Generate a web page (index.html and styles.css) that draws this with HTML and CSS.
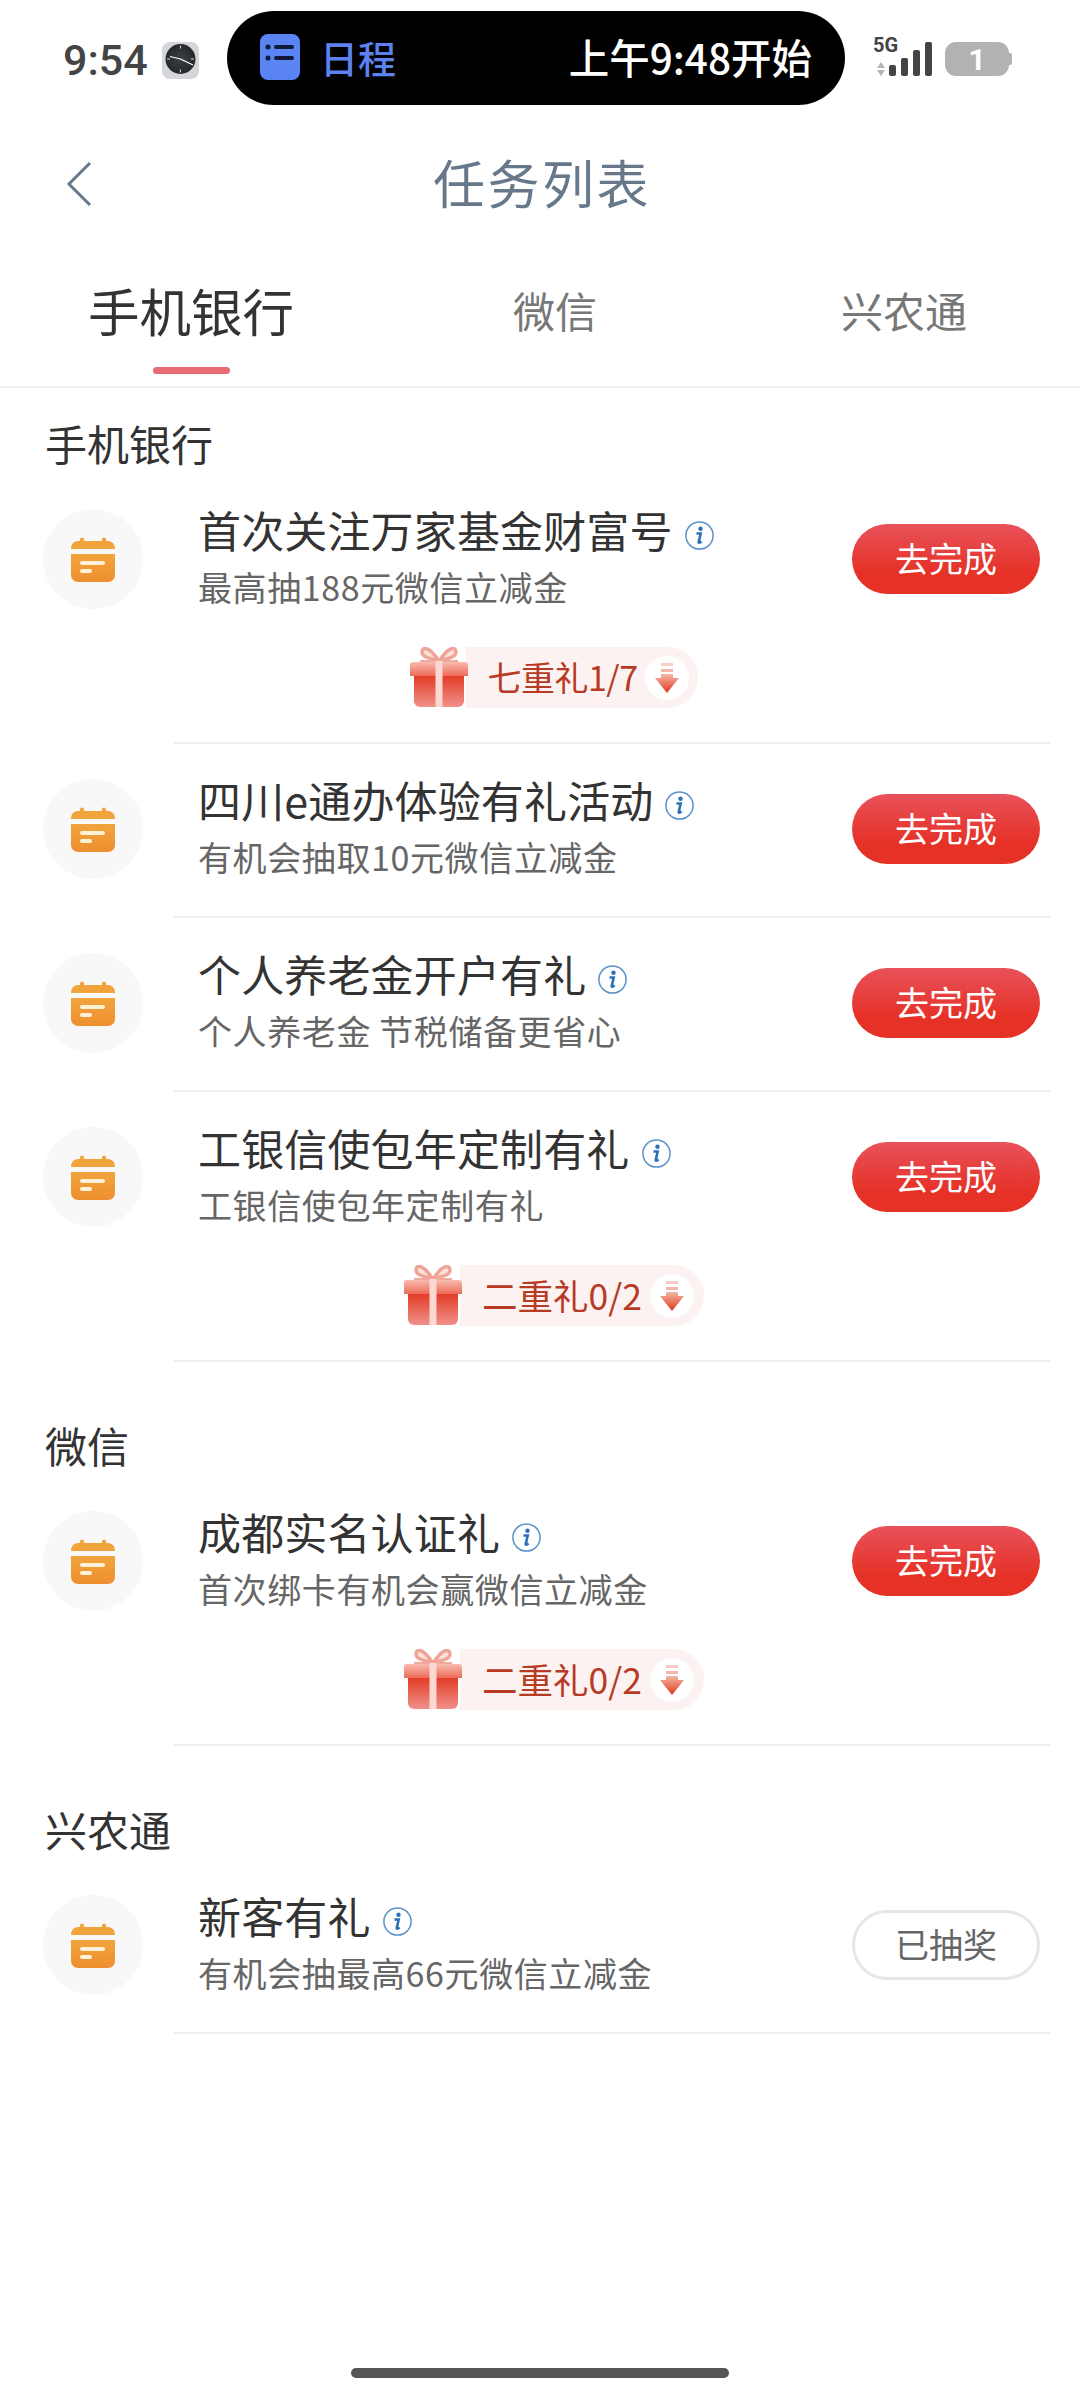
FILE: index.html
```html
<!DOCTYPE html>
<html lang="zh-CN">
<head>
  <meta charset="UTF-8">
  <title>任务列表</title>
  <link rel="stylesheet" href="styles.css">
</head>
<body>
  <!-- 图标定义 -->
  <svg class="defs" width="0" height="0">
    <defs>
      <linearGradient id="calTop" x1="0" y1="0" x2="0" y2="1"><stop offset="0" stop-color="#f2a43c"/><stop offset="1" stop-color="#ee8f30"/></linearGradient>
      <linearGradient id="giftLid" x1="0" y1="0" x2="0" y2="1"><stop offset="0" stop-color="#f8bcb0"/><stop offset="1" stop-color="#ec6a56"/></linearGradient>
      <linearGradient id="giftBody" x1="0" y1="0" x2="0" y2="1"><stop offset="0" stop-color="#e33c27"/><stop offset="1" stop-color="#f0918a"/></linearGradient>
      <linearGradient id="arrowFill" x1="0" y1="0" x2="0" y2="1"><stop offset="0" stop-color="#f4b7a8"/><stop offset="1" stop-color="#e2361f"/></linearGradient>
      <radialGradient id="dial"><stop offset="0" stop-color="#3c4045"/><stop offset="1" stop-color="#24272b"/></radialGradient>
    </defs>
    <symbol id="calendar" viewBox="0 0 44 46">
      <path d="M9 3.500a2 2 0 0 1 4 0V5h18V3.500a2 2 0 0 1 4 0V5h2a7 7 0 0 1 7 7v1H0v-1a7 7 0 0 1 7-7h2z" fill="#f2a43c"/>
      <path d="M0 18h44v21a7 7 0 0 1-7 7H7a7 7 0 0 1-7-7z" fill="url(#calTop)"/>
      <rect x="9" y="25" width="25" height="4" rx="2" fill="#fff1d6"/>
      <rect x="9" y="33" width="12" height="4" rx="2" fill="#fff1d6"/>
    </symbol>
    <symbol id="info" viewBox="0 0 29 29">
      <circle cx="14.500" cy="14.500" r="13.600" fill="#fff" stroke="#5b93c9" stroke-width="1.500"/>
      <circle cx="15.500" cy="7.800" r="2.200" fill="#2a6fb8"/>
      <path d="M11.500 12.500h4.200l-2 8.500c-.2.900.7 1.200 2.900-.5" fill="none" stroke="#2a6fb8" stroke-width="2.600"/>
    </symbol>
    <symbol id="gift" viewBox="0 0 58 60">
      <path d="M28 13C20 0 12-1 12 5c0 5 8 7 16 8zM30 13C38 0 46-1 46 5c0 5-8 7-16 8z" fill="#fbe0da" stroke="#f0a498" stroke-width="3.500"/>
      <path d="M10 14h38" stroke="#efa99c" stroke-width="2"/>
      <path d="M4 29h50v25a6 6 0 0 1-6 6H10a6 6 0 0 1-6-6z" fill="url(#giftBody)"/>
      <path d="M3 15h52a3 3 0 0 1 3 3v11H0V18a3 3 0 0 1 3-3z" fill="url(#giftLid)"/>
      <rect x="25.500" y="14" width="7" height="46" fill="#fbd9d2"/>
    </symbol>
    <symbol id="arrow" viewBox="0 0 24 30">
      <rect x="6" y="0" width="12" height="3" fill="#f7cfc5"/>
      <rect x="6" y="6" width="12" height="3" fill="#f3b6a8"/>
      <path d="M6 11h12v4h6L12 30 0 15h6z" fill="url(#arrowFill)"/>
    </symbol>
  </svg>

  <div class="page">
    <!-- 状态栏 -->
    <div class="status-bar">
      <span class="clock-time">9:54</span>
      <svg class="clock-icon" viewBox="0 0 37 37">
        <rect width="37" height="37" rx="8" fill="#d4d6da"/>
        <circle cx="18.500" cy="17" r="15" fill="url(#dial)"/>
        <g fill="#d8d8d8">
          <rect x="18" y="3.500" width="1" height="3"/>
          <rect x="18" y="27.500" width="1" height="3"/>
          <rect x="5" y="16.500" width="3" height="1"/>
          <rect x="29" y="16.500" width="3" height="1"/>
        </g>
        <path d="M18.500 17L8 14.500M18.500 17L31 23" stroke="#fff" stroke-width="1.200"/>
      </svg>
      <div class="island">
        <svg class="island-app" viewBox="0 0 40 46">
          <rect width="40" height="46" rx="8" fill="#5a84f1"/>
          <circle cx="8" cy="13" r="2.500" fill="#10193a"/>
          <circle cx="8" cy="24" r="2.500" fill="#10193a"/>
          <rect x="14" y="11" width="20" height="4" rx="2" fill="#10193a"/>
          <rect x="14" y="22" width="20" height="4" rx="2" fill="#10193a"/>
        </svg>
        <span class="island-name">日程</span>
        <span class="island-time">上午9:48开始</span>
      </div>
      <svg class="signal" viewBox="0 0 60 40">
        <path d="M8 20l-4 6h8zM8 34l-4-6h8z" fill="#b5b5b5"/>
        <rect x="16" y="23" width="7" height="11" rx="2" fill="#444"/>
        <rect x="28" y="16" width="7" height="18" rx="2" fill="#444"/>
        <rect x="40" y="8" width="7" height="26" rx="2" fill="#444"/>
        <rect x="52" y="0" width="7" height="34" rx="2" fill="#444"/>
      </svg>
      <span class="net-label">5G</span>
      <div class="battery"><span>1</span></div>
    </div>

    <!-- 标题栏 -->
    <div class="nav-bar">
      <svg class="back" viewBox="0 0 26 46"><path d="M24 2L3 23l21 21" fill="none" stroke="#66788a" stroke-width="3"/></svg>
      <h1>任务列表</h1>
    </div>

    <!-- 标签页 -->
    <div class="tabs">
      <div class="tab active">手机银行</div>
      <div class="tab">微信</div>
      <div class="tab">兴农通</div>
    </div>

    <!-- 手机银行 -->
    <section class="group first">
      <h2>手机银行</h2>
      <div class="task">
        <div class="task-main">
          <div class="task-icon"><svg><use href="#calendar"/></svg></div>
          <div class="task-text">
            <div class="task-title">首次关注万家基金财富号<svg class="info"><use href="#info"/></svg></div>
            <div class="task-sub">最高抽188元微信立减金</div>
          </div>
          <button class="btn">去完成</button>
        </div>
        <div class="gift-row">
          <svg class="gift"><use href="#gift"/></svg>
          <div class="gift-pill"><span>七重礼1/7</span><i class="arrow"><svg><use href="#arrow"/></svg></i></div>
        </div>
      </div>
      <div class="task">
        <div class="task-main">
          <div class="task-icon"><svg><use href="#calendar"/></svg></div>
          <div class="task-text">
            <div class="task-title">四川e通办体验有礼活动<svg class="info"><use href="#info"/></svg></div>
            <div class="task-sub">有机会抽取10元微信立减金</div>
          </div>
          <button class="btn">去完成</button>
        </div>
      </div>
      <div class="task">
        <div class="task-main">
          <div class="task-icon"><svg><use href="#calendar"/></svg></div>
          <div class="task-text">
            <div class="task-title">个人养老金开户有礼<svg class="info"><use href="#info"/></svg></div>
            <div class="task-sub">个人养老金 节税储备更省心</div>
          </div>
          <button class="btn">去完成</button>
        </div>
      </div>
      <div class="task">
        <div class="task-main">
          <div class="task-icon"><svg><use href="#calendar"/></svg></div>
          <div class="task-text">
            <div class="task-title">工银信使包年定制有礼<svg class="info"><use href="#info"/></svg></div>
            <div class="task-sub">工银信使包年定制有礼</div>
          </div>
          <button class="btn">去完成</button>
        </div>
        <div class="gift-row wide">
          <svg class="gift"><use href="#gift"/></svg>
          <div class="gift-pill"><span>二重礼0/2</span><i class="arrow"><svg><use href="#arrow"/></svg></i></div>
        </div>
      </div>
    </section>

    <!-- 微信 -->
    <section class="group">
      <h2>微信</h2>
      <div class="task">
        <div class="task-main">
          <div class="task-icon"><svg><use href="#calendar"/></svg></div>
          <div class="task-text">
            <div class="task-title">成都实名认证礼<svg class="info"><use href="#info"/></svg></div>
            <div class="task-sub">首次绑卡有机会赢微信立减金</div>
          </div>
          <button class="btn">去完成</button>
        </div>
        <div class="gift-row wide">
          <svg class="gift"><use href="#gift"/></svg>
          <div class="gift-pill"><span>二重礼0/2</span><i class="arrow"><svg><use href="#arrow"/></svg></i></div>
        </div>
      </div>
    </section>

    <!-- 兴农通 -->
    <section class="group">
      <h2>兴农通</h2>
      <div class="task">
        <div class="task-main">
          <div class="task-icon"><svg><use href="#calendar"/></svg></div>
          <div class="task-text">
            <div class="task-title">新客有礼<svg class="info"><use href="#info"/></svg></div>
            <div class="task-sub">有机会抽最高66元微信立减金</div>
          </div>
          <button class="btn done">已抽奖</button>
        </div>
      </div>
    </section>

    <div class="home-bar"></div>
  </div>
</body>
</html>
```

FILE: styles.css
```css
* { box-sizing: border-box; margin: 0; padding: 0; }
body {
  width: 1080px;
  height: 2400px;
  overflow: hidden;
  background: #fff;
  font-family: "Noto Sans CJK SC", "Noto Sans", sans-serif;
  color: #333;
}
.defs { position: absolute; }
.page {
  height: 2400px;
  display: flex;
  flex-direction: column;
}

/* 状态栏 */
.status-bar {
  height: 118px;
  padding: 11px 0 0 63px;
  display: flex;
  align-items: flex-start;
  position: relative;
}
.clock-time {
  width: 99px;
  margin-top: 30px;
  font-family: Roboto, sans-serif;
  font-size: 43px;
  line-height: 38px;
  font-weight: 500;
  color: #444;
}
.clock-icon { width: 37px; height: 37px; margin-top: 31px; }
.island {
  width: 618px;
  height: 94px;
  margin-left: 28px;
  padding: 0 33px;
  background: #000;
  border-radius: 47px;
  display: flex;
  align-items: center;
}
.island-app { width: 40px; height: 46px; margin-top: -2px; }
.island-name {
  margin: -4px 0 0 20px;
  font-size: 38px;
  font-weight: 500;
  color: #5b82ef;
}
.island-time {
  margin: -4px 0 0 auto;
  font-size: 40.500px;
  color: #fff;
  font-weight: 500;
}
.signal { width: 60px; height: 40px; margin: 31px 0 0 28px; }
.net-label {
  position: absolute;
  left: 873px;
  top: 33px;
  font-family: Roboto, sans-serif;
  font-size: 20px;
  line-height: 24px;
  font-weight: 700;
  color: #444;
}
.battery {
  width: 64px;
  height: 34px;
  margin: 31px 0 0 12px;
  background: #b2b2b2;
  border-radius: 11px;
  display: flex;
  align-items: center;
  justify-content: center;
  position: relative;
  font-family: Roboto, sans-serif;
  font-size: 30px;
  font-weight: 700;
  color: #fff;
}
.battery::after {
  content: "";
  position: absolute;
  right: -3px;
  top: 11px;
  width: 3px;
  height: 12px;
  border-radius: 0 2px 2px 0;
  background: #b2b2b2;
}

/* 标题栏 */
.nav-bar {
  height: 132px;
  padding: 0 0 5px 4px;
  position: relative;
  display: flex;
  align-items: center;
  justify-content: center;
}
.nav-bar h1 {
  font-size: 52px;
  font-weight: 400;
  letter-spacing: 2.500px;
  color: #66788a;
}
.back {
  position: absolute;
  left: 66px;
  top: 43px;
  width: 26px;
  height: 46px;
}

/* 标签页 */
.tabs {
  height: 138px;
  border-bottom: 2px solid #eeeeee;
  display: grid;
  grid-template-columns: 382px 346px 352px;
}
.tab {
  text-align: center;
  font-size: 42px;
  line-height: 119px;
  color: #777;
}
.tab.active {
  position: relative;
  font-size: 51.500px;
  color: #333;
}
.tab.active::after {
  content: "";
  position: absolute;
  left: 153px;
  top: 117px;
  width: 77px;
  height: 7px;
  border-radius: 4px;
  background: #e96b73;
}

/* 任务分组 */
.group { padding-top: 58px; }
.group.first { padding-top: 30px; }
.group h2 {
  padding-left: 45px;
  padding-bottom: 3px;
  height: 56px;
  font-size: 42px;
  font-weight: 400;
  line-height: 50px;
  color: #333;
}
.task {
  margin-right: 30px;
  border-bottom: 2px solid #eeeeee;
  position: relative;
}
.task::before {
  content: "";
  position: absolute;
  left: 0;
  bottom: -2px;
  width: 174px;
  height: 2px;
  background: #fff;
}
.task-main {
  height: 172px;
  padding: 0 10px 2px 43px;
  display: flex;
  align-items: center;
}
.task-icon {
  width: 100px;
  height: 100px;
  border-radius: 50%;
  background: #f8f8f8;
  display: flex;
  align-items: center;
  justify-content: center;
}
.task-icon svg { width: 44px; height: 46px; }
.task-text { flex: 1; margin: -2px 0 0 55px; }
.task-title {
  font-size: 43px;
  letter-spacing: .15px;
  line-height: 58px;
  color: #333;
  display: flex;
  align-items: center;
}
.info { width: 29px; height: 29px; margin: 12px 0 0 12px; }
.task-sub {
  font-size: 34px;
  letter-spacing: .6px;
  line-height: 58px;
  color: #666;
}
.btn {
  width: 188px;
  height: 70px;
  padding-bottom: 3px;
  border: none;
  border-radius: 35px;
  background: linear-gradient(#e8525a, #e63127 70%);
  font-family: inherit;
  font-size: 34px;
  color: #fff;
}
.btn.done {
  background: #fff;
  border: 3px solid #e6e6e6;
  color: #666;
}

/* 礼包 */
.gift-row {
  height: 96px;
  padding: 1px 0 33px 58px;
  display: flex;
  justify-content: center;
  align-items: flex-start;
}
.gift { width: 58px; height: 60px; position: relative; z-index: 1; }
.gift-pill {
  height: 61px;
  margin-left: -2px;
  padding: 0 9px 3px 21px;
  background: #fdf2f2;
  border-radius: 0 31px 31px 0;
  display: flex;
  align-items: center;
  gap: 7px;
  font-size: 34px;
  letter-spacing: -.5px;
  color: #b83a22;
}
.gift-row.wide .gift-pill {
  padding-right: 10px;
  padding-left: 22px;
  gap: 8px;
  font-size: 35.500px;
  letter-spacing: 0;
}
.arrow {
  width: 44px;
  height: 44px;
  margin-top: 3px;
  border-radius: 50%;
  background: #fff;
  display: flex;
  align-items: center;
  justify-content: center;
}
.arrow svg { width: 24px; height: 30px; }

/* 底部指示条 */
.home-bar {
  width: 378px;
  height: 10px;
  margin: auto auto 22px;
  border-radius: 5px;
  background: #555;
}
```
